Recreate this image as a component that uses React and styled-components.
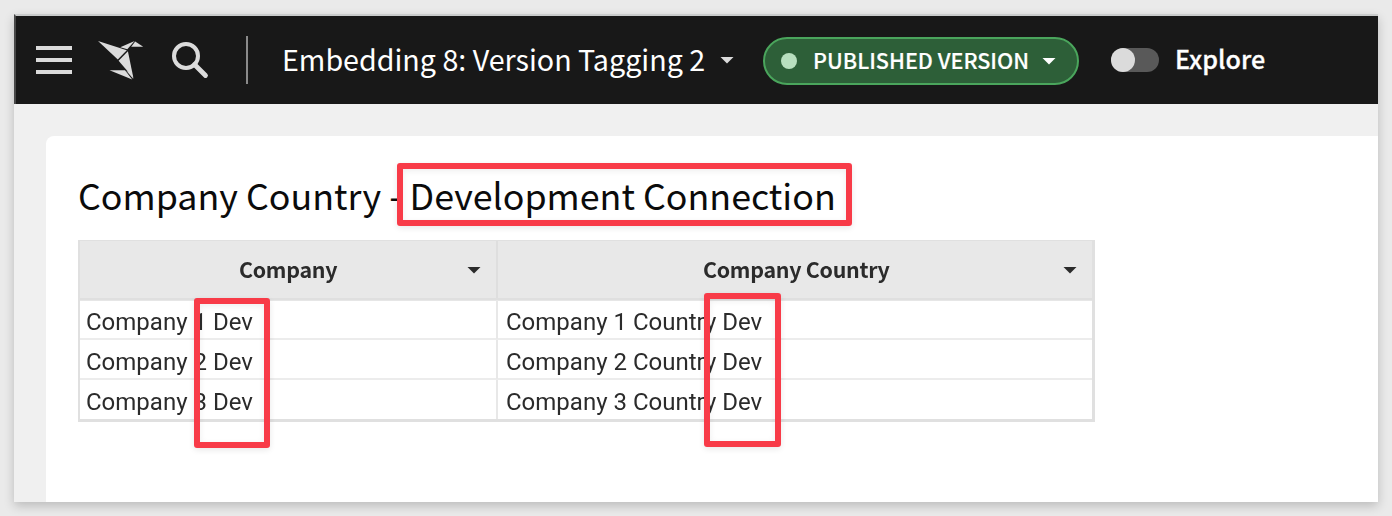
import React from "react";
import styled, { createGlobalStyle } from "styled-components";

const sans = `"Noto Sans CJK SC", "Noto Sans", sans-serif`;

const GlobalStyle = createGlobalStyle`
  *, *::before, *::after { box-sizing: border-box; }
  body { margin: 0; background: #eaeaea; overflow: hidden; }
`;

const Page = styled.div`
  height: 516px;
  padding: 14px;
  font-family: ${sans};
`;

const Window = styled.div`
  position: relative;
  display: flex;
  flex-direction: column;
  height: 488px;
  background: #f0f0f0;
  box-shadow: 0 4px 10px rgba(0, 0, 0, 0.2);
`;

const TopBar = styled.header`
  display: flex;
  align-items: center;
  flex: none;
  height: 90px;
  padding-left: 20px;
  background: #181818;
  border-top: 2px solid #c9cbcb;
  border-left: 2px solid #484848;
  color: #fff;
  white-space: nowrap;
`;

const Icon = styled.svg`
  display: block;
  flex: none;
  margin-left: ${(p) => p.$gap || 0}px;
`;

const Divider = styled.div`
  width: 2px;
  height: 48px;
  margin-left: 36px;
  background: #8a8a8a;
`;

const DocumentName = styled.div`
  width: 424px;
  margin: 0 0 2px 34px;
  font-size: 28.65px;
  line-height: 40px;
`;

const Caret = styled.i`
  flex: none;
  width: 14px;
  height: 7px;
  margin-left: ${(p) => p.$gap || 0}px;
  background: ${(p) => p.$color};
  clip-path: polygon(0 0, 100% 0, 50% 100%);
`;

const SoftCaret = styled.span`
  display: flex;
  filter: blur(0.6px);
`;

const VersionPill = styled.div`
  display: flex;
  align-items: center;
  width: 316px;
  height: 48px;
  margin: 2px 0 0 29px;
  padding-left: 16px;
  background: #2d5f38;
  border: 2px solid #4aa55c;
  border-radius: 24px;
`;

const Dot = styled.i`
  width: 16px;
  height: 16px;
  border-radius: 50%;
  background: #b8dfbf;
`;

const PillLabel = styled.span`
  width: 217px;
  margin: 0 0 2px 16px;
  font-size: 21.55px;
  font-weight: 500;
  line-height: 30px;
  -webkit-text-stroke: 0.15px currentColor;
`;

const Switch = styled.div`
  width: 48px;
  height: 24px;
  margin-left: 32px;
  background: #595959;
  border-radius: 12px;
`;

const Knob = styled.div`
  width: 24px;
  height: 24px;
  background: #dbdbdb;
  border-radius: 50%;
`;

const SwitchLabel = styled.span`
  margin: 0 0 4px 16px;
  font-size: 25.1px;
  font-weight: 500;
  line-height: 36px;
  -webkit-text-stroke: 0.3px currentColor;
`;

const Canvas = styled.main`
  flex: 1;
  margin: 32px 0 0 32px;
  padding: 34px 0 0 32px;
  background: #fff;
  border-top-left-radius: 8px;
`;

const Title = styled.h1`
  margin: 0;
  height: 70px;
  color: #0b0b0b;
  font-size: 35.8px;
  font-weight: 400;
  line-height: 48px;
  white-space: nowrap;
`;

const Table = styled.div`
  width: 1017px;
  border: 2px solid #e0e0e0;
  border-width: 1px 3px 3px 2px;
  color: #2b2b2b;
`;

const Row = styled.div`
  display: grid;
  grid-template-columns: 418px 594px;
  height: ${(p) => (p.$last ? 39 : 40)}px;
  border-bottom: ${(p) => (p.$last ? 0 : 2)}px solid #ececec;
`;

const HeaderRow = styled(Row)`
  height: 59px;
  background: #e8e8e8;
  border-bottom: 2px solid #dfdfdf;
  box-shadow: 0 1px 0 #e6e6e6;
`;

const HeaderCell = styled.div`
  display: flex;
  align-items: center;
  justify-content: flex-end;
  padding: 1px 15px 0 0;
  border-right: ${(p) => (p.$last ? 0 : 2)}px solid #dedede;
  font-size: 21.4px;
  font-weight: 700;
`;

const HeaderLabel = styled.span`
  flex: 1;
  padding-left: ${(p) => p.$indent}px;
  margin-bottom: 3px;
  letter-spacing: -0.28px;
  filter: blur(0.6px);
`;

const Cell = styled.div`
  padding: 4px 0 0 ${(p) => (p.$last ? 8 : 6)}px;
  border-right: ${(p) => (p.$last ? 0 : 2)}px solid #e8e8e8;
  font-family: Roboto, sans-serif;
  font-size: 24px;
  line-height: 34px;
  white-space: nowrap;
`;

const CellText = styled.span`
  display: block;
  padding-top: 1px;
  filter: blur(0.6px);
`;

const Highlight = styled.div`
  position: absolute;
  left: ${(p) => p.$x}px;
  top: ${(p) => p.$y}px;
  width: ${(p) => p.$w}px;
  height: ${(p) => p.$h}px;
  border: 6px solid #f83b48;
  border-radius: 3px;
  box-shadow: 0 2px 6px rgba(0, 0, 0, 0.09), inset 0 2px 6px rgba(0, 0, 0, 0.07);
`;

const rows = [1, 2, 3];

export default function App() {
  return (
    <Page>
      <GlobalStyle />
      <Window>
        <TopBar>
          <Icon width="36" height="28" viewBox="0 0 36 28" fill="#dbdbdb">
            <path d="M0 0h36v4H0zM0 12h36v4H0zM0 24h36v4H0z" />
          </Icon>
          <Icon $gap={26} width="46" height="40" viewBox="0 0 46 40" fill="#dbdbdb">
            <path d="M0 1L28.8 10.3L19.8 19.6Z" />
            <path d="M22.3 7.3L36.6 1L29.3 9.2Z" />
            <path d="M37.2 1.4L45.2 6.7L33.2 6.7Z" />
            <path d="M20.6 20.8L29.9 11.2L35.4 38Z" />
            <path d="M11.5 30.2L27 30.2L34.2 39.5Z" />
            <path d="M28 30.6L35.4 39L33.8 34Z" />
          </Icon>
          <Icon $gap={28} width="38" height="38" viewBox="0 0 38 38" fill="none" stroke="#dbdbdb">
            <circle cx="14" cy="15" r="12" strokeWidth="4" />
            <path d="M22.5 23.5L33.5 34.5" strokeWidth="4.8" strokeLinecap="round" />
          </Icon>
          <Divider />
          <DocumentName>Embedding 8: Version Tagging 2</DocumentName>
          <Caret $gap={14} $color="#dbdbdb" />
          <VersionPill>
            <Dot />
            <PillLabel>PUBLISHED VERSION</PillLabel>
            <Caret $gap={12} $color="#fff" />
          </VersionPill>
          <Switch>
            <Knob />
          </Switch>
          <SwitchLabel>Explore</SwitchLabel>
        </TopBar>
        <Canvas>
          <Title>Company Country - Development Connection</Title>
          <Table>
            <HeaderRow>
              <HeaderCell>
                <HeaderLabel $indent={159}>Company</HeaderLabel>
                <SoftCaret>
                  <Caret $color="#2b2b2b" />
                </SoftCaret>
              </HeaderCell>
              <HeaderCell $last>
                <HeaderLabel $indent={205}>Company Country</HeaderLabel>
                <SoftCaret>
                  <Caret $color="#2b2b2b" />
                </SoftCaret>
              </HeaderCell>
            </HeaderRow>
            {rows.map((n) => (
              <Row key={n} $last={n === rows.length}>
                <Cell>
                  <CellText>Company {n} Dev</CellText>
                </Cell>
                <Cell $last>
                  <CellText>Company {n} Country Dev</CellText>
                </Cell>
              </Row>
            ))}
          </Table>
        </Canvas>
        <Highlight $x={383} $y={149} $w={455} $h={63} />
        <Highlight $x={180} $y={284} $w={76} $h={150} />
        <Highlight $x={690} $y={279} $w={77} $h={154} />
      </Window>
    </Page>
  );
}
